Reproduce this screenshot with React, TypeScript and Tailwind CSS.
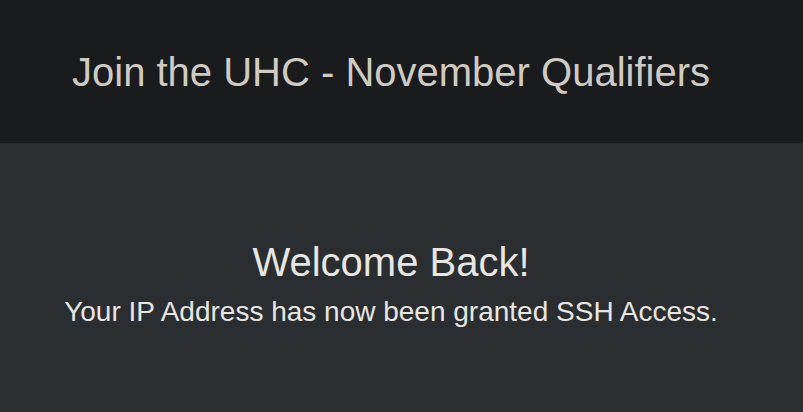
import React from 'react'

const App = () => {
  return (
    <div className="min-h-[412px] bg-[#2b2e31] font-['Liberation_Sans',Arial,sans-serif]">
      <header className="h-[143px] bg-[#1a1b1d] flex items-center pl-[72px]">
        <h1 className="text-[40px] text-[#cfcbc3] leading-none">
          Join the UHC - November Qualifiers
        </h1>
      </header>
      <main className="flex flex-col items-center pt-[94px] pr-[21px]">
        <h2 className="text-[40px] text-[#e8e6e3] leading-tight">Welcome Back!</h2>
        <p className="mt-1 text-[28px] text-[#e8e6e3] leading-normal">
          Your IP Address has now been granted SSH Access.
        </p>
      </main>
    </div>
  )
}

export default App
